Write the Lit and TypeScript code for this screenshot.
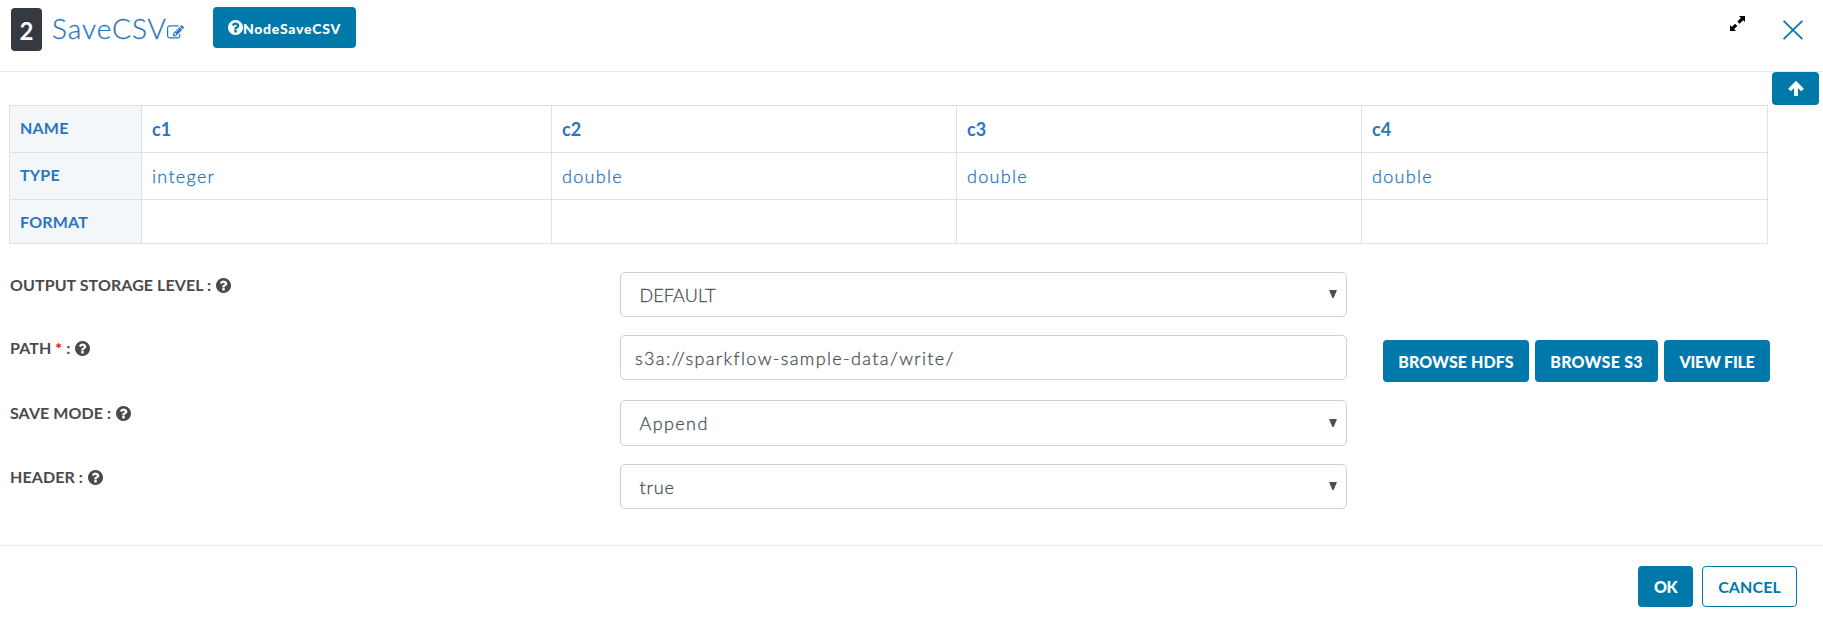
import { LitElement, html, css, svg } from "lit";
import { customElement, property } from "lit/decorators.js";

const HELP = svg`<path d="M1024 1376v-192q0-14-9-23t-23-9h-192q-14 0-23 9t-9 23v192q0 14 9 23t23 9h192q14 0 23-9t9-23zM1280 704q0-88-55.500-163t-138.500-116-170-41q-243 0-371 213-15 24 8 42l132 100q7 6 19 6 16 0 25-12 53-68 86-92 34-24 86-24 48 0 85.500 26t37.500 59q0 38-20 61t-68 45q-63 28-115.500 86.500t-52.500 125.500v36q0 14 9 23t23 9h192q14 0 23-9t9-23q0-19 21.500-49.500t54.500-49.500q32-18 49-28.500t46-35 44.500-48 28-60.500 12.500-81zM1664 896q0 209-103 385.500t-279.500 279.500-385.500 103-385.500-103-279.500-279.500-103-385.500 103-385.500 279.500-279.500 385.500-103 385.500 103 279.500 279.500 103 385.500z"/>`;

const helpIcon = () => html`<svg class="help" viewBox="128 128 1536 1536" fill="currentColor">${HELP}</svg>`;

@customElement("schema-table")
class SchemaTable extends LitElement {
  static styles = css`
    :host { display: block; }
    .grid {
      display: grid;
      grid-template-columns: 132px 410px 405px 405px 1fr;
      grid-template-rows: 47px 47px 44px;
      border: 1px solid #dee2e6;
      border-width: 1px 0 0 1px;
      color: #2a76bd;
    }
    .cell {
      border: 1px solid #dee2e6;
      border-width: 0 1px 1px 0;
      padding-left: 10px;
      font-size: 18px;
      font-weight: 300;
      -webkit-text-stroke: 0.3px currentColor;
      line-height: 46px;
      letter-spacing: 1.3px;
      overflow: hidden;
    }
    .head { background: #f3f7fa; font-size: 16px; font-weight: 700; line-height: 44px; letter-spacing: 0.2px; -webkit-text-stroke: 0; }
    .name { font-weight: 700; letter-spacing: 0; line-height: 47px; -webkit-text-stroke: 0; }
  `;

  columns = [["c1", "integer"], ["c2", "double"], ["c3", "double"], ["c4", "double"]];

  render() {
    return html`<div class="grid">
      <div class="cell head">NAME</div>
      ${this.columns.map(([n]) => html`<div class="cell name">${n}</div>`)}
      <div class="cell head">TYPE</div>
      ${this.columns.map(([, t]) => html`<div class="cell">${t}</div>`)}
      <div class="cell head">FORMAT</div>
      ${this.columns.map(() => html`<div class="cell"></div>`)}
    </div>`;
  }
}

@customElement("form-row")
class FormRow extends LitElement {
  static styles = css`
    :host { display: flex; align-items: flex-start; height: 45px; }
    :host([tall]) { height: 46px; }
    .label {
      display: flex;
      width: 610px;
      flex: none;
      color: #4a4a4a;
      font-size: 16px;
      font-weight: 700;
      line-height: 26px;
      letter-spacing: 0.08px;
      white-space: pre;
    }
    .req { color: #f00; }
    .help { width: 15px; height: 15px; margin: 5.500px 0 0 5px; }
    .box {
      box-sizing: border-box;
      display: flex;
      align-items: center;
      justify-content: space-between;
      width: 727px;
      height: 100%;
      border: 1px solid #ccd1d9;
      border-radius: 5px;
      padding: 0 9px 0 18.500px;
      color: #495057;
      font-size: 18px;
      font-weight: 300;
      -webkit-text-stroke: 0.3px currentColor;
      line-height: 44px;
    }
    .text { padding-left: 14px; }
    .DEFAULT { letter-spacing: 0.1px; }
    .Append { letter-spacing: 1.4px; }
    .true { letter-spacing: 0.9px; }
    .value-text { letter-spacing: 1.36px; }
    .caret { width: 8px; height: 8px; margin-bottom: 1px; }
    .extra { margin-left: 35px; padding-top: 5px; }
  `;

  @property() label = "";
  @property() value = "";
  @property({ type: Boolean }) required = false;
  @property({ type: Boolean }) text = false;

  render() {
    return html`
      <div class="label">${this.label}${this.required ? html` <span class="req">*</span>` : ""} :${helpIcon()}</div>
      <div class="box ${this.text ? "text" : ""}">
        <span class="${this.text ? "value-text" : this.value}">${this.value}</span>
        ${this.text ? "" : html`<svg class="caret" viewBox="0 0 8 8"><path d="M0 0h8L4.600 8h-1.200z" fill="#495057"/></svg>`}
      </div>
      <div class="extra"><slot></slot></div>
    `;
  }
}

@customElement("app-root")
class AppRoot extends LitElement {
  static styles = css`
    :host {
      display: flex;
      flex-direction: column;
      height: 618px;
      overflow: hidden;
      background: #fff;
      font-family: Lato, "Open Sans", sans-serif;
    }
    header {
      box-sizing: border-box;
      display: flex;
      align-items: flex-start;
      height: 72px;
      flex: none;
      border-bottom: 1px solid #e9ecef;
      padding: 7px 20.500px 0 11px;
    }
    .badge {
      width: 31px;
      height: 43px;
      margin-top: 1px;
      border-radius: 4px;
      background: #343a40;
      color: #fff;
      font-size: 24px;
      font-weight: 700;
      line-height: 46px;
      text-align: center;
    }
    .title {
      width: 115px;
      margin-left: 10px;
      color: #2a76bd;
      font-size: 28px;
      font-weight: 300;
      -webkit-text-stroke: 0.3px currentColor;
      line-height: 43px;
      letter-spacing: 0.95px;
      white-space: nowrap;
    }
    .edit { width: 17px; height: 17px; margin-top: 17px; color: #2a76bd; }
    .btn {
      box-sizing: border-box;
      display: flex;
      align-items: center;
      justify-content: center;
      border-radius: 4px;
      background: #0079aa;
      color: #fff;
      font-size: 16px;
      font-weight: 900;
      letter-spacing: 0.1px;
      height: 42px;
    }
    .node { width: 143px; height: 41px; margin-left: 29px; font-size: 14px; letter-spacing: 0.75px; }
    .node span { margin-top: 2px; }
    .help { width: 15px; height: 15px; }
    .spacer { flex: 1; }
    .expand { width: 15px; height: 15px; margin-top: 9px; }
    .close { width: 20px; height: 20px; margin: 12.500px 0 0 37.500px; }
    .up { width: 47px; height: 33px; margin: 0 4px 0 auto; }
    .up svg { width: 16px; height: 15px; }
    .table { margin: 0 55px 0 9px; }
    .form { display: flex; flex-direction: column; padding: 28px 0 0 10px; }
    .r2 { margin-top: 18px; }
    .r3 { margin-top: 20px; }
    .r4 { margin-top: 18px; }
    .browse { display: flex; gap: 6px; padding-left: 1px; }
    .hdfs { width: 146px; }
    .s3 { width: 123px; letter-spacing: 0.25px; }
    .view { width: 106px; letter-spacing: -0.27px; }
    footer {
      box-sizing: border-box;
      display: flex;
      justify-content: flex-end;
      gap: 9px;
      margin-top: auto;
      height: 73px;
      border-top: 1px solid #e9ecef;
      padding: 20px 26px 0 0;
    }
    .ok { width: 55px; height: 41px; letter-spacing: -0.6px; }
    .cancel { width: 95px; height: 41px; background: #fff; color: #0079aa; border: 1px solid #0079aa; font-weight: 700; }
  `;

  render() {
    return html`
      <header>
        <div class="badge">2</div>
        <div class="title">SaveCSV</div>
        <svg class="edit" viewBox="0 0 1792 1792" fill="currentColor"><path d="M888 1184l116-116-152-152-116 116v56h96v96h56zm440-720q-16-16-33 1l-350 350q-17 17-1 33t33-1l350-350q17-17 1-33zm80 594v190q0 119-84.500 203.500t-203.500 84.500h-832q-119 0-203.500-84.500t-84.500-203.500v-832q0-119 84.500-203.500t203.500-84.500h832q63 0 117 25 15 7 18 23 3 17-9 29l-49 49q-14 14-32 8-23-6-45-6h-832q-66 0-113 47t-47 113v832q0 66 47 113t113 47h832q66 0 113-47t47-113v-126q0-13 9-22l64-64q15-15 35-7t20 29zm-96-738l288 288-672 672h-288v-288zm444 132l-92 92-288-288 92-92q28-28 68-28t68 28l152 152q28 28 28 68t-28 68z"/></svg>
        <div class="btn node">${helpIcon()}<span>NodeSaveCSV</span></div>
        <div class="spacer"></div>
        <svg class="expand" viewBox="0 0 15 15"><path d="M9 0h6v6l-1.800-1.800-3.600 3.600-2.200-2.200 3.500-3.500zM0 9l1.900 1.900 3.200-3.200 2.200 2.200-3.200 3.200L6 15H0z"/></svg>
        <svg class="close" viewBox="0 0 20 20" fill="none" stroke="#0079aa" stroke-width="1.800"><path d="M.6 .8l18.800 18.400M19.400 .8L.6 19.200"/></svg>
      </header>
      <div class="btn up"><svg viewBox="0 0 16 15" fill="none" stroke="#fff" stroke-width="3.800"><path d="M8 15V3M1.500 9L8 2.500 14.500 9"/></svg></div>
      <schema-table class="table"></schema-table>
      <div class="form">
        <form-row label="OUTPUT STORAGE LEVEL" value="DEFAULT"></form-row>
        <form-row class="r2" label="PATH" value="s3a://sparkflow-sample-data/write/" required text>
          <div class="browse">
            <div class="btn hdfs">BROWSE HDFS</div>
            <div class="btn s3">BROWSE S3</div>
            <div class="btn view">VIEW FILE</div>
          </div>
        </form-row>
        <form-row class="r3" label="SAVE MODE" value="Append" tall></form-row>
        <form-row class="r4" label="HEADER" value="true"></form-row>
      </div>
      <footer>
        <div class="btn ok">OK</div>
        <div class="btn cancel">CANCEL</div>
      </footer>
    `;
  }
}
